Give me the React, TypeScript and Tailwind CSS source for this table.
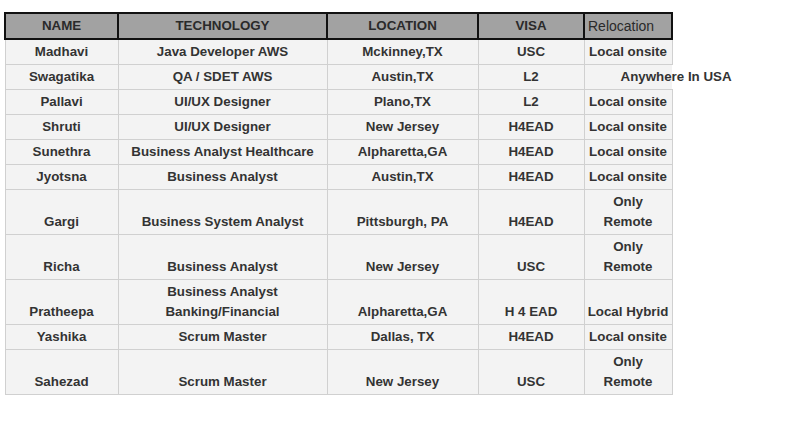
import React from "react";

type Row = { name: string; tech: string[]; loc: string; visa: string; reloc: string[]; overflow?: boolean };

const rows: Row[] = [
  { name: "Madhavi", tech: ["Java Developer AWS"], loc: "Mckinney,TX", visa: "USC", reloc: ["Local onsite"] },
  { name: "Swagatika", tech: ["QA / SDET AWS"], loc: "Austin,TX", visa: "L2", reloc: ["Anywhere In USA"], overflow: true },
  { name: "Pallavi", tech: ["UI/UX Designer"], loc: "Plano,TX", visa: "L2", reloc: ["Local onsite"] },
  { name: "Shruti", tech: ["UI/UX Designer"], loc: "New Jersey", visa: "H4EAD", reloc: ["Local onsite"] },
  { name: "Sunethra", tech: ["Business Analyst Healthcare"], loc: "Alpharetta,GA", visa: "H4EAD", reloc: ["Local onsite"] },
  { name: "Jyotsna", tech: ["Business Analyst"], loc: "Austin,TX", visa: "H4EAD", reloc: ["Local onsite"] },
  { name: "Gargi", tech: ["Business System Analyst"], loc: "Pittsburgh, PA", visa: "H4EAD", reloc: ["Only", "Remote"] },
  { name: "Richa", tech: ["Business Analyst"], loc: "New Jersey", visa: "USC", reloc: ["Only", "Remote"] },
  { name: "Pratheepa", tech: ["Business Analyst", "Banking/Financial"], loc: "Alpharetta,GA", visa: "H 4 EAD", reloc: ["Local Hybrid"] },
  { name: "Yashika", tech: ["Scrum Master"], loc: "Dallas, TX", visa: "H4EAD", reloc: ["Local onsite"] },
  { name: "Sahezad", tech: ["Scrum Master"], loc: "New Jersey", visa: "USC", reloc: ["Only", "Remote"] },
];

const td = "border border-[#d0d0d0] bg-[#f3f3f3] px-[2px] pt-[2px] pb-[2px] align-bottom text-center font-bold text-[13.33px] leading-[20px] text-[#333]";
const th = "border-2 border-[#111] bg-[#a2a2a2] py-[2px] text-[13.33px] leading-[20px] text-[#2a2a2a]";

export default function App() {
  return (
    <div className="min-h-[429px] w-[786px] bg-white pt-[12px] pl-[4px]" style={{ fontFamily: '"Liberation Sans", Arial, sans-serif' }}>
      <table className="table-fixed border-collapse w-[667px]">
        <colgroup>
          <col className="w-[113px]" />
          <col className="w-[209px]" />
          <col className="w-[151px]" />
          <col className="w-[106px]" />
          <col className="w-[88px]" />
        </colgroup>
        <thead>
          <tr>
            <th className={`${th} font-bold text-center`}>NAME</th>
            <th className={`${th} font-bold text-center`}>TECHNOLOGY</th>
            <th className={`${th} font-bold text-center`}>LOCATION</th>
            <th className={`${th} font-bold text-center`}>VISA</th>
            <th className={`${th} font-normal text-left pl-[3px] text-[14px]`}>Relocation</th>
          </tr>
        </thead>
        <tbody>
          {rows.map((r) => (
            <tr key={r.name}>
              <td className={td}>{r.name}</td>
              <td className={td}>
                {r.tech.map((t) => (
                  <div key={t}>{t}</div>
                ))}
              </td>
              <td className={td}>{r.loc}</td>
              <td className={td}>{r.visa}</td>
              {r.overflow ? (
                <td className={`${td} border-r-0 text-left overflow-visible`}>
                  <div className="whitespace-nowrap pl-[34px]">{r.reloc[0]}</div>
                </td>
              ) : (
                <td className={td}>
                  {r.reloc.map((t) => (
                    <div key={t}>{t}</div>
                  ))}
                </td>
              )}
            </tr>
          ))}
        </tbody>
      </table>
    </div>
  );
}
